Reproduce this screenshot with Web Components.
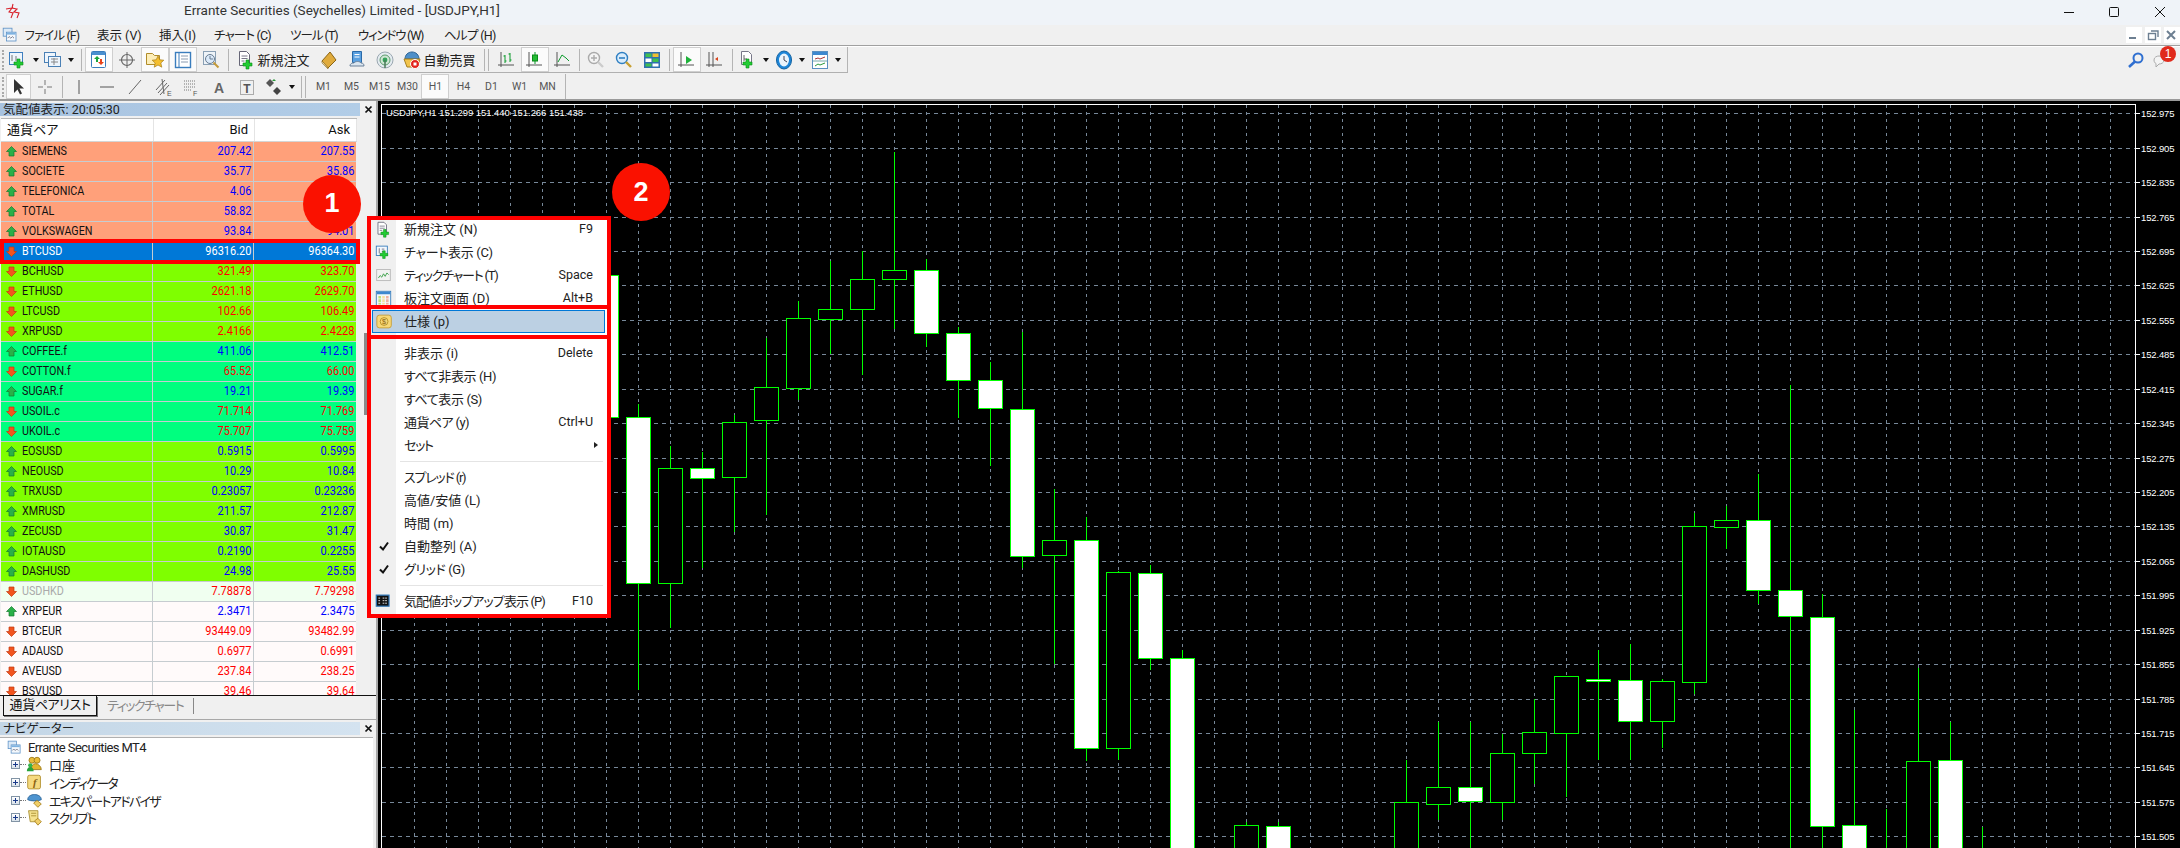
<!DOCTYPE html>
<html lang="ja">
<head>
<meta charset="utf-8">
<title>Errante MT4</title>
<style>
  html, body { margin: 0; height: 100%; overflow: hidden; }
  body {
    position: relative;
    width: 2180px;
    height: 848px;
    display: flex;
    flex-direction: column;
    background: #f0f0f0;
    color: #111;
    font: 12.5px Roboto, "Noto Sans CJK JP", sans-serif;
    font-feature-settings: "palt";
  }
  .main { flex: 1; display: flex; min-height: 0; }
  .left { width: 378px; box-sizing: border-box; border-right: 2px solid #a8a8a8; display: flex; flex-direction: column; }
</style>
</head>
<body>
<title-bar>Errante Securities (Seychelles) Limited - [USDJPY,H1]</title-bar>
<menu-bar></menu-bar>

<tool-bar ruled>
  <tool-btn w="34" icon="newChart" arrow></tool-btn>
  <tool-btn w="37" icon="profile" arrow></tool-btn>
  <tool-sep w="8"></tool-sep>
  <tool-btn w="28" icon="market" pressed></tool-btn>
  <tool-btn w="28" icon="cross"></tool-btn>
  <tool-btn w="28" icon="navigator" pressed></tool-btn>
  <tool-btn w="28" icon="terminal" pressed></tool-btn>
  <tool-btn w="28" icon="tester"></tool-btn>
  <tool-sep w="6"></tool-sep>
  <tool-btn w="84" icon="newOrder">新規注文</tool-btn>
  <tool-btn w="28" icon="book"></tool-btn>
  <tool-btn w="28" icon="server"></tool-btn>
  <tool-btn w="28" icon="signal"></tool-btn>
  <tool-btn w="80" icon="auto">自動売買</tool-btn>
  <tool-sep w="14" double></tool-sep>
  <tool-btn w="28" icon="bars"></tool-btn>
  <tool-btn w="28" icon="candle" pressed></tool-btn>
  <tool-btn w="28" icon="line"></tool-btn>
  <tool-sep w="5"></tool-sep>
  <tool-btn w="28" icon="zoomIn"></tool-btn>
  <tool-btn w="28" icon="zoomOut"></tool-btn>
  <tool-btn w="28" icon="tile"></tool-btn>
  <tool-sep w="7"></tool-sep>
  <tool-btn w="28" icon="scroll" pressed></tool-btn>
  <tool-btn w="28" icon="shift"></tool-btn>
  <tool-sep w="6"></tool-sep>
  <tool-btn w="36" icon="indicator" arrow></tool-btn>
  <tool-btn w="36" icon="clock" arrow></tool-btn>
  <tool-btn w="36" icon="template" arrow></tool-btn>
  <tool-end></tool-end>
  <tool-btn slot="right" w="24" icon="search" style="margin-right:2px"></tool-btn>
  <chat-icon slot="right"></chat-icon>
</tool-bar>

<tool-bar bottom>
  <tool-btn w="25" icon="arrow" pressed></tool-btn>
  <tool-btn w="28" icon="thin"></tool-btn>
  <tool-sep w="6"></tool-sep>
  <tool-btn w="28" icon="vline"></tool-btn>
  <tool-btn w="28" icon="hline"></tool-btn>
  <tool-btn w="28" icon="trend"></tool-btn>
  <tool-btn w="28" icon="channel"></tool-btn>
  <tool-btn w="28" icon="fibo"></tool-btn>
  <tool-btn w="28" icon="letter"></tool-btn>
  <tool-btn w="28" icon="textbox"></tool-btn>
  <tool-btn w="36" icon="shapes" arrow></tool-btn>
  <tool-sep w="12" double></tool-sep>
  <tool-btn w="28" small>M1</tool-btn>
  <tool-btn w="28" small>M5</tool-btn>
  <tool-btn w="28" small>M15</tool-btn>
  <tool-btn w="28" small>M30</tool-btn>
  <tool-btn w="28" small pressed>H1</tool-btn>
  <tool-btn w="28" small>H4</tool-btn>
  <tool-btn w="28" small>D1</tool-btn>
  <tool-btn w="28" small>W1</tool-btn>
  <tool-btn w="28" small>MN</tool-btn>
  <tool-end></tool-end>
</tool-bar>

<div class="main">
  <div class="left">
    <market-watch>
      <quote-row sym="SIEMENS" bid="207.42" ask="207.55" dir="up" bg="#ffa07a"></quote-row>
      <quote-row sym="SOCIETE" bid="35.77" ask="35.86" dir="up" bg="#ffa07a"></quote-row>
      <quote-row sym="TELEFONICA" bid="4.06" dir="up" bg="#ffa07a"></quote-row>
      <quote-row sym="TOTAL" bid="58.82" dir="up" bg="#ffa07a"></quote-row>
      <quote-row sym="VOLKSWAGEN" bid="93.84" ask="94.01" dir="up" bg="#ffa07a"></quote-row>
      <quote-row sym="BTCUSD" bid="96316.20" ask="96364.30" dir="down" selected></quote-row>
      <quote-row sym="BCHUSD" bid="321.49" ask="323.70" dir="down" bg="#7fff00"></quote-row>
      <quote-row sym="ETHUSD" bid="2621.18" ask="2629.70" dir="down" bg="#7fff00"></quote-row>
      <quote-row sym="LTCUSD" bid="102.66" ask="106.49" dir="down" bg="#7fff00"></quote-row>
      <quote-row sym="XRPUSD" bid="2.4166" ask="2.4228" dir="down" bg="#7fff00"></quote-row>
      <quote-row sym="COFFEE.f" bid="411.06" ask="412.51" dir="up" bg="#00ff7f"></quote-row>
      <quote-row sym="COTTON.f" bid="65.52" ask="66.00" dir="down" bg="#00ff7f"></quote-row>
      <quote-row sym="SUGAR.f" bid="19.21" ask="19.39" dir="up" bg="#00ff7f"></quote-row>
      <quote-row sym="USOIL.c" bid="71.714" ask="71.769" dir="down" bg="#00ff7f"></quote-row>
      <quote-row sym="UKOIL.c" bid="75.707" ask="75.759" dir="down" bg="#00ff7f"></quote-row>
      <quote-row sym="EOSUSD" bid="0.5915" ask="0.5995" dir="up" bg="#7fff00"></quote-row>
      <quote-row sym="NEOUSD" bid="10.29" ask="10.84" dir="up" bg="#7fff00"></quote-row>
      <quote-row sym="TRXUSD" bid="0.23057" ask="0.23236" dir="up" bg="#7fff00"></quote-row>
      <quote-row sym="XMRUSD" bid="211.57" ask="212.87" dir="up" bg="#7fff00"></quote-row>
      <quote-row sym="ZECUSD" bid="30.87" ask="31.47" dir="up" bg="#7fff00"></quote-row>
      <quote-row sym="IOTAUSD" bid="0.2190" ask="0.2255" dir="up" bg="#7fff00"></quote-row>
      <quote-row sym="DASHUSD" bid="24.98" ask="25.55" dir="up" bg="#7fff00"></quote-row>
      <quote-row sym="USDHKD" bid="7.78878" ask="7.79298" dir="down" bg="#f0fff0" muted></quote-row>
      <quote-row sym="XRPEUR" bid="2.3471" ask="2.3475" dir="up" bg="#fffafa"></quote-row>
      <quote-row sym="BTCEUR" bid="93449.09" ask="93482.99" dir="down" bg="#fffafa"></quote-row>
      <quote-row sym="ADAUSD" bid="0.6977" ask="0.6991" dir="down" bg="#fffafa"></quote-row>
      <quote-row sym="AVEUSD" bid="237.84" ask="238.25" dir="down" bg="#fffafa"></quote-row>
      <quote-row sym="BSVUSD" bid="39.46" ask="39.64" dir="down" bg="#fffafa"></quote-row>
    </market-watch>
    <nav-panel>
      <tree-node icon="server2" root style="letter-spacing:-.6px">Errante Securities MT4</tree-node>
      <tree-node icon="people">口座</tree-node>
      <tree-node icon="func" style="letter-spacing:-1.8px">インディケータ</tree-node>
      <tree-node icon="hat" style="letter-spacing:-1.7px">エキスパートアドバイザ</tree-node>
      <tree-node icon="scrollDoc" style="letter-spacing:-2px">スクリプト</tree-node>
    </nav-panel>
  </div>
  <price-chart></price-chart>
</div>

<context-menu>
  <menu-row icon="newOrder" key="F9">新規注文 (N)</menu-row>
  <menu-row icon="chartPlus" style="letter-spacing:-.3px">チャート表示 (C)</menu-row>
  <menu-row icon="tick" key="Space" style="letter-spacing:-1.2px">ティックチャート (T)</menu-row>
  <menu-row icon="board" key="Alt+B">板注文画面 (D)</menu-row>
  <menu-row icon="spec" active>仕様 (p)</menu-row>
  <menu-gap></menu-gap>
  <menu-row key="Delete">非表示 (i)</menu-row>
  <menu-row style="letter-spacing:-.4px">すべて非表示 (H)</menu-row>
  <menu-row style="letter-spacing:-.4px">すべて表示 (S)</menu-row>
  <menu-row key="Ctrl+U" style="letter-spacing:-.6px">通貨ペア (y)</menu-row>
  <menu-row sub style="letter-spacing:-1.300px">セット</menu-row>
  <menu-gap></menu-gap>
  <menu-row style="letter-spacing:-1.200px">スプレッド (r)</menu-row>
  <menu-row>高値/安値 (L)</menu-row>
  <menu-row>時間 (m)</menu-row>
  <menu-row checked>自動整列 (A)</menu-row>
  <menu-row checked style="letter-spacing:-.4px">グリッド (G)</menu-row>
  <menu-gap></menu-gap>
  <menu-row icon="popup" key="F10" style="letter-spacing:-.9px">気配値ポップアップ表示 (P)</menu-row>
</context-menu>

<red-box x="0" y="239" w="360" h="25"></red-box>
<red-box x="367" y="305" w="244" h="34"></red-box>
<step-badge x="332" y="203.5">1</step-badge>
<step-badge x="641" y="192">2</step-badge>

<script>
const plus = (x, y) => `<path d="M${x} ${y}h3v3h3v3h-3v3h-3v-3h-3v-3h3z" fill="#22cc33" stroke="#0a8a1a" stroke-width=".6"/>`;
const axes = '<path d="M4 2v15M1 15h16" stroke="#555" fill="none"/>';

const ICONS = {
  newChart: `<rect x="1.5" y="2.5" width="13" height="12" fill="#eef5fc" stroke="#3f7fbf"/><path d="M4 5v6M8 6v5" stroke="#777"/>${plus(9, 9)}`,
  profile: `<rect x="1.5" y="2.5" width="11" height="10" fill="#eef5fc" stroke="#4a80b5"/><rect x="5.5" y="6.5" width="12" height="10" fill="#eef5fc" stroke="#4a80b5"/><path d="M8 9h7M8 12h7M11 8v7" stroke="#888"/>`,
  market: `<rect x="2.5" y="1.5" width="14" height="16" rx="1" fill="#fff" stroke="#3a7dbd"/><rect x="3" y="2" width="13" height="3" fill="#4a90d0"/><path d="M8 6l-3 3h2v3h2V9h2z" fill="#1aa53a"/><path d="M12 15l3-3h-2V9h-2v3H9z" fill="#e8431a"/>`,
  cross: '<circle cx="10" cy="10" r="5.5" fill="none" stroke="#666" stroke-width="1.2"/><path d="M10 2v16M2 10h16" stroke="#666"/>',
  navigator: '<path d="M1.5 3.5h6l2 2h5v9h-13z" fill="#fdeeb8" stroke="#b08c2a"/><path d="M13 6l1.800 3.800 4 .4-3 2.800 1 4.200-3.800-2.200-3.800 2.200 1-4.200-3-2.800 4-.4z" fill="#f5bf2e" stroke="#a87c16" stroke-width=".7"/>',
  terminal: '<rect x="2.5" y="2.5" width="15" height="15" fill="#fff" stroke="#3a7dbd" stroke-width="1.4"/><path d="M6 3v14" stroke="#3a7dbd"/><path d="M8 6h7M8 9h7M8 12h7" stroke="#8a9bb0"/>',
  tester: '<rect x="2.5" y="1.5" width="12" height="13" fill="#eef3f8" stroke="#8aa0b5"/><circle cx="9" cy="9" r="4.5" fill="#dbeafa" stroke="#667a8f"/><path d="M9 6v3h3" stroke="#667a8f" fill="none"/><path d="M12.5 12.5l5 5" stroke="#c49a3a" stroke-width="2"/>',
  newOrder: `<path d="M3.5 1.5h7l3 3v11h-10z" fill="#fff" stroke="#667"/><path d="M5.5 6h6M5.5 8.5h6M5.5 11h3" stroke="#778"/>${plus(10, 10)}`,
  book: '<path d="M3 11l8-9 6 8-8 8z" fill="#e0ab3c" stroke="#8a6414"/><path d="M3 11l6 7v1l-6-6z" fill="#fff3c8" stroke="#8a6414" stroke-width=".6"/>',
  server: '<path d="M5.5 1.5h9v11h-9z" fill="#5aa0e0" stroke="#2a6aa8"/><path d="M7.5 4.5h5M7.5 7h5" stroke="#fff"/><path d="M3 16c0-3 3-3 4-3 1-2 6-2 7 0 2 0 3 1 3 3z" fill="#dbe6f0" stroke="#6a8099"/>',
  signal: '<circle cx="10" cy="10" r="8" fill="#e4ebf0" stroke="#9aa7b0"/><circle cx="10" cy="10" r="5" fill="#cfe6d4" stroke="#5d9b6e"/><circle cx="10" cy="10" r="2.4" fill="#35a35a"/><path d="M10 10v8" stroke="#4a7a5a" stroke-width="1.5"/>',
  auto: '<path d="M3 9c0-4 3-7 7-7s7 3 7 7z" fill="#4e8fc8" stroke="#2a6295"/><path d="M2 9h16l-2 8H5z" fill="#f2c44c" stroke="#a67f1c"/><circle cx="13" cy="14" r="4.5" fill="#e3231b" stroke="#fff"/><rect x="11.5" y="12.5" width="3" height="3" fill="#fff"/>',
  bars: `${axes}<path d="M8 5v8M8 6H6.5M8 11h1.5M13 3v9M13 4h-1.5M13 10h1.5" stroke="#0a9a2a" fill="none"/>`,
  candle: `${axes}<path d="M10 2v12" stroke="#0a9a2a"/><rect x="7.5" y="5" width="5" height="6" fill="#22bb33" stroke="#0a8a1a"/>`,
  line: `${axes}<path d="M5 12l4-7 4 3 3 3" stroke="#0a9a2a" fill="none"/>`,
  zoomIn: '<circle cx="8" cy="8" r="5.5" fill="#f4f4f4" stroke="#aaa" stroke-width="1.4"/><path d="M5 8h6M8 5v6" stroke="#aaa" stroke-width="1.4"/><path d="M12 12l5 5" stroke="#ccc" stroke-width="2.4"/>',
  zoomOut: '<circle cx="8" cy="8" r="5.5" fill="#d9ecfb" stroke="#2f7fc2" stroke-width="1.4"/><path d="M5 8h6" stroke="#2f7fc2" stroke-width="1.6"/><path d="M12 12l5 5" stroke="#c8a032" stroke-width="2.4"/>',
  tile: '<rect x="2" y="2" width="16" height="16" fill="#2e6fb0"/><rect x="3.5" y="3.5" width="6" height="3.5" fill="#3fbf4f"/><rect x="10.5" y="3.5" width="6" height="3.5" fill="#f0c030"/><rect x="3.5" y="8.5" width="6" height="3.5" fill="#fff"/><rect x="10.5" y="8.5" width="6" height="3.5" fill="#3fbf4f"/><rect x="3.5" y="13.5" width="6" height="3" fill="#3fbf4f"/><rect x="10.5" y="13.5" width="6" height="3" fill="#fff"/>',
  scroll: `${axes}<path d="M9 6l6 4-6 4z" fill="#1eb23a"/>`,
  shift: `<path d="M4 2v15M1 15h16M8 2v15" stroke="#555" fill="none"/><path d="M13 7l-3 2 3 2z" fill="#d9421a"/>`,
  indicator: `<path d="M3.5 1.5h7l3 3v10h-10z" fill="#fff" stroke="#778"/><path d="M6 5v6M6 9h3" stroke="#666"/>${plus(8, 9)}`,
  clock: '<ellipse cx="10" cy="10" rx="7.5" ry="9" fill="#1d86d9" stroke="#10609f"/><ellipse cx="10" cy="10" rx="5" ry="6.5" fill="#eaf4fc"/><path d="M10 6v4l3 2" stroke="#445" fill="none"/>',
  template: '<rect x="2.5" y="1.5" width="15" height="17" fill="#fff" stroke="#5a8fc0"/><rect x="3" y="2" width="14" height="3" fill="#3d88cf"/><path d="M5 9l3-1 2 1 5-2" stroke="#a33" fill="none"/><path d="M3 11h14" stroke="#7aa"/><path d="M5 16l3-2 2 1 5-2" stroke="#2a9a3a" fill="none"/>',
  arrow: '<path d="M6 2v14l3.5-3.5 2.5 5 2-1-2.5-5H16z" fill="#333"/>',
  thin: '<path d="M10 3v5M10 12v5M3 10h5M12 10h5" stroke="#777"/>',
  vline: '<path d="M10 3v14" stroke="#555"/>',
  hline: '<path d="M3 10h14" stroke="#555"/>',
  trend: '<path d="M4 17L16 3" stroke="#666"/>',
  channel: '<path d="M3 13L12 3M5 16L14 6M7 18l9-10M9 2l2 15" stroke="#666" fill="none"/><text x="14" y="19" font-size="7" fill="#555">E</text>',
  fibo: '<path d="M3 4h12M3 7h12M3 10h12M3 13h8" stroke="#777" stroke-dasharray="1 1"/><text x="12" y="19" font-size="7" fill="#555">F</text>',
  letter: '<text x="10" y="16" font-size="14" font-weight="700" text-anchor="middle" fill="#666">A</text>',
  textbox: '<rect x="3.5" y="3.5" width="13" height="14" fill="none" stroke="#666" stroke-dasharray="1 1"/><text x="10" y="15.5" font-size="12" font-weight="700" text-anchor="middle" fill="#555">T</text>',
  shapes: '<path d="M6 2l4 4-4 4-4-4z" fill="#555"/><path d="M8 4l2-2 2 2z" fill="#2a9a3a"/><path d="M13 10l4 4-4 4-4-4z" fill="#444"/>',
  search: '<circle cx="12" cy="8" r="4.5" fill="none" stroke="#2f6fd0" stroke-width="2"/><path d="M9 11.5l-6 5.5" stroke="#2f6fd0" stroke-width="2.6"/>',
  chartPlus: `<rect x="1.5" y="2.5" width="13" height="11" fill="#f3f8fd" stroke="#2f77b8"/><path d="M5 5v6M8 6h3M8 9h3" stroke="#667"/>${plus(9, 8)}`,
  tick: '<rect x="2" y="3" width="16" height="13" fill="#f2f2f2" stroke="#b5b5b5"/><path d="M4 13l2-3 2 2 2-4 2 3 2-4 2 2" stroke="#2a9a3a" fill="none"/>',
  board: '<rect x="1.5" y="1.5" width="17" height="17" fill="#f3f7fb" stroke="#2f77b8"/><rect x="2" y="2" width="16" height="3" fill="#3d88cf"/><path d="M4 7h3v3H4zM4 11h3v3H4zM4 15h3v2H4z" fill="#bde07a"/><path d="M8.5 7h3v3h-3zM8.5 11h3v3h-3zM8.5 15h3v2h-3z" fill="#f5e0a0"/><path d="M13 7h3v3h-3zM13 11h3v3h-3zM13 15h3v2h-3z" fill="#f0b0a0"/>',
  spec: '<rect x="1" y="2.500" width="17" height="15" rx="3" fill="#f7d877" stroke="#c49a30"/><circle cx="9.500" cy="10" r="4.600" fill="none" stroke="#b08a20"/><text x="9.500" y="13" font-size="8.500" text-anchor="middle" fill="#8a6212">$</text>',
  popup: '<rect x="1.500" y="2.500" width="15" height="13" fill="#111" stroke="#2f77b8" stroke-width="1.400"/><path d="M4 6h3M4 9h3M4 12h3M9 6h5M9 9h5M9 12h5" stroke="#fff" stroke-dasharray="2 1"/>',
  server2: '<rect x="1.500" y="1.500" width="11" height="10" fill="#dceaf7" stroke="#5a90c5"/><rect x="5.500" y="6.500" width="12" height="11" fill="#f4f8fc" stroke="#5a90c5"/><rect x="6" y="7" width="11" height="2.500" fill="#7db2e0"/><path d="M7 14l2-2 2 2 2-2 2 2" stroke="#667" fill="none"/>',
  people: '<circle cx="7" cy="5" r="3.500" fill="#e9bc3a" stroke="#9a7614"/><circle cx="13" cy="5" r="3.500" fill="#e9bc3a" stroke="#9a7614"/><path d="M6 16c0-4 2-7 5-7s7 3 7 7z" fill="#e4b52e" stroke="#9a7614"/><circle cx="5" cy="11" r="2.500" fill="#35b34a"/><path d="M1 18c0-3 1.500-5 4-5s4 2 4 5z" fill="#27a33a"/>',
  func: '<rect x="2" y="1.500" width="15" height="16" rx="2" fill="#f5da80" stroke="#b08c2a"/><text x="9.500" y="14" font-size="13" font-style="italic" font-weight="700" font-family="Liberation Serif" text-anchor="middle" fill="#8a6212">f</text>',
  hat: '<path d="M2 9c0-4 4-6 8-6s8 2 8 6c-3 2-13 2-16 0z" fill="#4d94d0" stroke="#2a6295"/><path d="M9 13l4-3 5 4-4 4z" fill="#f0cf6a" stroke="#a67f1c"/>',
  scrollDoc: '<path d="M3 2h11v13H5z" fill="#f5e28e" stroke="#a58a2a"/><path d="M6 5h6M6 8h6" stroke="#a58a2a"/><path d="M10 14l4-3 4 4-4 4z" fill="#f0cf6a" stroke="#a67f1c"/>'
};
const icon = (name, size = 20) => `<svg width="${size}" height="${size}" viewBox="0 0 20 20" style="display:block;font-family:'Liberation Sans'">${ICONS[name] || ''}</svg>`;

class TitleBar extends HTMLElement {
  constructor() {
    super();
    this.attachShadow({ mode: 'open' }).innerHTML = /* html */ `
      <style>
        :host { display: flex; align-items: center; height: 25px; background: #eff3f8; flex: none; }
        .logo { width: 16px; height: 16px; margin: -4px 0 0 5px; }
        .title { margin: -5px 0 0 163px; font-size: 13.5px; color: #333; white-space: nowrap; }
        .ctl { margin: 0 0 0 auto; display: flex; }
        .ctl svg { display: block; width: 46px; height: 20px; }
      </style>
      <svg class="logo" viewBox="0 0 16 16"><path d="M1 6l6-1-3 4 4 1-2 5M8 1l-1 4 5 1-3 3 5 1-2 5" fill="none" stroke="#d8202a" stroke-width="1.100"/></svg>
      <span class="title"><slot></slot></span>
      <div class="ctl">
        <svg viewBox="0 0 46 20"><path d="M22 9.500h10" stroke="#111"/></svg>
        <svg viewBox="0 0 46 20"><rect x="21.500" y="4.500" width="9" height="9" rx="1" fill="none" stroke="#111"/></svg>
        <svg viewBox="0 0 46 20"><path d="M21 4l10 10M31 4L21 14" stroke="#111"/></svg>
      </div>`;
  }
}
customElements.define('title-bar', TitleBar);

class MenuBar extends HTMLElement {
  constructor() {
    super();
    const items = [['ファイル (F)', 72.5, -.9], ['表示 (V)', 62, 0], ['挿入(I)', 55, 0], ['チャート (C)', 76, -.8], ['ツール (T)', 68, -1], ['ウィンドウ (W)', 86, -1.2], ['ヘルプ (H)', 60, -.7]];
    this.attachShadow({ mode: 'open' }).innerHTML = /* html */ `
      <style>
        :host { display: flex; align-items: center; height: 20px; background: #f0f0f0; border-bottom: 1px solid #a0a0a0; flex: none; }
        .app { margin: 0 6.500px 0 2px; width: 16px; }
        span { flex: none; font-size: 12.5px; white-space: nowrap; color: #222; margin-top: -2px; }
        .mdi { margin-left: auto; display: flex; gap: 3px; }
        .mdi svg { display: block; width: 16px; height: 16px; background: #fff; }
      </style>
      <div class="app">${icon('server2', 16)}</div>
      ${items.map(([t, w, ls]) => `<span style="width:${w}px;letter-spacing:${ls}px">${t}</span>`).join('')}
      <div class="mdi">
        <svg viewBox="0 0 16 16"><path d="M3 11h7" stroke="#6d7f91" stroke-width="2"/></svg>
        <svg viewBox="0 0 16 16"><rect x="3.500" y="6.500" width="7" height="6" fill="none" stroke="#6d7f91" stroke-width="1.400"/><path d="M6 4h7v6" fill="none" stroke="#6d7f91" stroke-width="1.400"/></svg>
        <svg viewBox="0 0 16 16"><path d="M3 4l8 8M11 4l-8 8" stroke="#6d7f91" stroke-width="2"/></svg>
      </div>`;
  }
}
customElements.define('menu-bar', MenuBar);

class ToolBar extends HTMLElement {
  constructor() {
    super();
    this.attachShadow({ mode: 'open' }).innerHTML = /* html */ `
      <style>
        :host { display: flex; align-items: stretch; height: 27px; background: #f0f0f0; border-top: 1px solid #fff; box-sizing: border-box; flex: none; }
        :host([bottom]) { height: 28px; padding-top: 1px; border-top: 0; border-bottom: 2px solid #9a9a9a; }
        .run { display: flex; align-items: center; padding-left: 2px; }
        :host([ruled]) .run { border-bottom: 1px solid #b0b0b0; }
        .handle { width: 2px; height: 20px; margin-right: 2px; border-left: 2px dotted #aaa; box-sizing: border-box; }
        .right { margin-left: auto; display: flex; align-items: center; }
      </style>
      <div class="run"><div class="handle"></div><slot></slot></div>
      <div class="right"><slot name="right"></slot></div>`;
  }
}
customElements.define('tool-bar', ToolBar);

class ToolBtn extends HTMLElement {
  constructor() {
    super();
    const name = this.getAttribute('icon');
    const hasArrow = this.hasAttribute('arrow');
    this.attachShadow({ mode: 'open' }).innerHTML = /* html */ `
      <style>
        :host { display: flex; align-items: center; justify-content: center; flex: none; height: 25px; box-sizing: border-box; font-size: 13px; white-space: nowrap; color: #222; }
        :host([pressed]) { background: #fbfbfb; border: 1px solid #cfcfcf; }
        :host([small]) { font-size: 10.5px; color: #555; }
        .lbl { margin-left: 1px; }
        i { width: 0; height: 0; margin-left: 4px; border: 3px solid transparent; border-top: 4px solid #111; border-bottom: 0; }
      </style>
      ${name ? icon(name) : ''}
      <span class="lbl"><slot></slot></span>
      ${hasArrow ? '<i></i>' : ''}`;
    this.style.width = this.getAttribute('w') + 'px';
  }
}
customElements.define('tool-btn', ToolBtn);

class ToolSep extends HTMLElement {
  constructor() {
    super();
    this.attachShadow({ mode: 'open' }).innerHTML = /* html */ `
      <style>
        :host { display: flex; justify-content: center; gap: 3px; flex: none; }
        b { width: 1px; height: 22px; background: #b4b4b4; }
      </style>
      <b></b>${this.hasAttribute('double') ? '<b></b>' : ''}`;
    this.style.width = this.getAttribute('w') + 'px';
  }
}
customElements.define('tool-sep', ToolSep);

class ToolEnd extends HTMLElement {
  constructor() {
    super();
    this.attachShadow({ mode: 'open' }).innerHTML = '<style>:host { display: block; width: 1px; height: 100%; margin-left: 4px; background: #b4b4b4; }</style>';
  }
}
customElements.define('tool-end', ToolEnd);

class ChatIcon extends HTMLElement {
  constructor() {
    super();
    this.attachShadow({ mode: 'open' }).innerHTML = /* html */ `
      <style>
        :host { display: block; position: relative; width: 28px; height: 24px; margin-right: 2px; }
        svg { position: absolute; left: 2px; top: 5px; }
        b { position: absolute; left: 10px; top: -2px; width: 16px; height: 16px; border-radius: 50%; background: #e02a1c; color: #fff; font: 400 12px/16px "Liberation Sans", sans-serif; text-align: center; }
      </style>
      <svg width="16" height="16" viewBox="0 0 16 16"><path d="M2 7c0-3 3-4 5-4s5 1 5 4-3 4-5 4l-3 3v-3.500C3 10 2 9 2 7z" fill="#f4f4f4" stroke="#aaa"/></svg>
      <b>1</b>`;
  }
}
customElements.define('chat-icon', ChatIcon);

class PanelHead extends HTMLElement {
  constructor() {
    super();
    this.attachShadow({ mode: 'open' }).innerHTML = /* html */ `
      <style>
        :host { display: flex; height: 13px; margin-top: 2px; flex: none; position: relative; }
        .bar { width: 360px; background: linear-gradient(90deg, var(--head-a), var(--head-b)); line-height: 13px; padding-left: 3px; box-sizing: border-box; font-size: 12.5px; color: #222; white-space: nowrap; }
        svg { margin: 2px 0 0 4px; }
      </style>
      <div class="bar"><slot></slot></div>
      <svg width="9" height="9" viewBox="0 0 9 9"><path d="M1.500 1.500l6 6M7.500 1.500l-6 6" stroke="#111" stroke-width="1.700"/></svg>`;
  }
}
customElements.define('panel-head', PanelHead);

class MarketWatch extends HTMLElement {
  constructor() {
    super();
    this.attachShadow({ mode: 'open' }).innerHTML = /* html */ `
      <style>
        :host { display: flex; flex-direction: column; height: 619px; flex: none; --head-a: #a8c3e0; --head-b: #b2cde7; font-size: 13px; }
        .head { display: grid; grid-template-columns: 153px 101px 102px; height: 24px; margin: 2px 0 0 1px; background: #fff; width: 356px; line-height: 22px; border-top: 1px solid #b8b8b8; box-sizing: border-box; border-bottom: 1px solid #d5d5d5; }
        .head span { padding: 0 6px; border-right: 1px solid #e4e4e4; box-sizing: border-box; }
        .head .n { text-align: right; }
        .list { position: relative; height: 553px; overflow: hidden; width: 373px; padding-left: 1px; box-sizing: border-box; }
        .thumb { position: absolute; left: 364px; top: 191px; width: 3px; height: 82px; background: #8a8a8a; }
        .tabs { height: 25px; box-sizing: border-box; border-top: 1px solid #111; border-bottom: 1px solid #a8a8a8; display: flex; font-size: 13px; }
        .tab { height: 20px; line-height: 18px; box-sizing: border-box; }
        .on { width: 94px; margin-left: 3px; text-align: center; letter-spacing: -.4px; border: 1px solid #111; border-width: 0 1px 1px 1px; background: #f0f0f0; box-shadow: 1px 1px 0 #777; }
        .off { margin-left: 10px; color: #888; padding-right: 10px; border-right: 1px solid #888; height: 16px; margin-top: 2px; line-height: 16px; letter-spacing: -1.5px; }
      </style>
      <panel-head>気配値表示: 20:05:30</panel-head>
      <div class="head"><span>通貨ペア</span><span class="n">Bid</span><span class="n">Ask</span></div>
      <div class="list"><slot></slot><div class="thumb"></div></div>
      <div class="tabs"><div class="tab on">通貨ペアリスト</div><div class="tab off">ティックチャート</div></div>`;
  }
}
customElements.define('market-watch', MarketWatch);

class QuoteRow extends HTMLElement {
  constructor() {
    super();
    const get = n => this.getAttribute(n);
    const up = get('dir') === 'up';
    const sel = this.hasAttribute('selected');
    const price = sel ? '#fff' : up ? '#0000ff' : '#ff0000';
    this.attachShadow({ mode: 'open' }).innerHTML = /* html */ `
      <style>
        :host { display: grid; grid-template-columns: 152px 101px 102px; width: 355px; height: 20px; box-sizing: border-box; border-bottom: 1px solid #c6ccd0; background: ${sel ? '#0078d7' : get('bg')}; }
        div { height: 19px; line-height: 19px; display: flex; align-items: center; border-right: 1px solid #c6ccd0; box-sizing: border-box; font-size: 12.5px; white-space: nowrap; }
        div:last-child { border-right: 0; }
        .sym { padding-left: 5px; color: ${sel ? '#fff' : this.hasAttribute('muted') ? '#aaa' : '#111'}; }
        .sym span { display: inline-block; margin: 0 0 2px 5px; transform: scaleX(.86); transform-origin: left center; }
        .num { justify-content: flex-end; padding-right: 2px; color: ${price}; }
        .num span { display: inline-block; margin-bottom: 2px; transform: scaleX(.88); transform-origin: right center; }
        svg { flex: none; }
      </style>
      <div class="sym">
        <svg width="11" height="11" viewBox="0 0 11 11"><path d="${up ? 'M5.500 0.500L10.500 5.500H8V10H3V5.500H0.500z' : 'M5.500 10.500L10.500 5.500H8V1H3V5.500H0.500z'}" fill="${up ? '#2bb048' : '#f2541e'}" stroke="${up ? '#167a2e' : '#c23a10'}" stroke-width=".7"/></svg>
        <span>${get('sym')}</span>
      </div>
      <div class="num"><span>${get('bid')}</span></div>
      <div class="num"><span>${get('ask') || ''}</span></div>`;
  }
}
customElements.define('quote-row', QuoteRow);

class NavPanel extends HTMLElement {
  constructor() {
    super();
    this.attachShadow({ mode: 'open' }).innerHTML = /* html */ `
      <style>
        :host { display: flex; flex-direction: column; flex: 1; min-height: 0; --head-a: #c3d6e6; --head-b: #d4e3f0; }
        .body { flex: 1; margin-top: 2px; width: 373px; background: #fff; border-top: 1px solid #b0b0b0; padding-top: 1px; box-sizing: border-box; }
      </style>
      <panel-head>ナビゲーター</panel-head>
      <div class="body"><slot></slot></div>`;
  }
}
customElements.define('nav-panel', NavPanel);

class TreeNode extends HTMLElement {
  constructor() {
    super();
    const root = this.hasAttribute('root');
    this.attachShadow({ mode: 'open' }).innerHTML = /* html */ `
      <style>
        :host { display: flex; align-items: center; height: ${root ? '16px' : '17.700px'}; margin-bottom: ${root ? '1px' : '0'}; padding-left: ${root ? '7px' : '11px'}; font-size: 13px; color: #222; white-space: nowrap; position: relative; }
        .box { width: 7px; height: 7px; border: 1px solid #8294a5; background: linear-gradient(#fff, #d9e2ea); box-sizing: content-box; position: relative; flex: none; }
        .box::before { content: ''; position: absolute; left: 1px; right: 1px; top: 3px; height: 1px; background: #1a3a8a; }
        .box::after { content: ''; position: absolute; top: 1px; bottom: 1px; left: 3px; width: 1px; background: #1a3a8a; }
        .dots { width: 6px; border-top: 1px dotted #777; flex: none; }
        .ico { flex: none; margin-right: 5px; }
        .txt { margin-left: 1px; }
      </style>
      ${root ? '' : '<span class="box"></span><span class="dots"></span>'}
      <span class="ico">${icon(this.getAttribute('icon'), root ? 15 : 17)}</span>
      <span class="txt"><slot></slot></span>`;
  }
}
customElements.define('tree-node', TreeNode);

const CANDLES = [
  // index from x=638, wick top, body top, body bottom, wick bottom, fill
  [-1, 260, 274, 415.6, 440, 1],
  [0, 402.8, 415.6, 581.6, 688.5, 1], [1, 444.8, 466.7, 581.6, 626.5, 0], [2, 451, 466.7, 476.7, 566.9, 1],
  [3, 414.2, 420.9, 475.8, 531.1, 0], [4, 337, 386, 419, 513.9, 0], [5, 300.2, 316.9, 387, 399, 0],
  [6, 259.7, 307.8, 318.3, 352.7, 0], [7, 249.7, 277.8, 307.8, 373.7, 0], [8, 150.9, 268.7, 277.8, 328.4, 0],
  [9, 257.8, 268.7, 331.7, 345.5, 1], [10, 325.5, 331.7, 378.9, 417, 1], [11, 360.8, 378.9, 407, 464.8, 1],
  [12, 331.2, 408, 555, 566.9, 1], [13, 487.7, 538.7, 554, 662.7, 0], [14, 515.8, 538.7, 746.7, 760, 1],
  [15, 570.2, 570.7, 746.7, 759, 0], [16, 564, 571.6, 656.5, 668.5, 1], [17, 648.9, 657, 870, 870, 1],
  [19, 821, 824.3, 870, 870, 0], [20, 821, 825.3, 870, 870, 1], [24, 759, 801.3, 870, 870, 0],
  [25, 721, 785.7, 802.7, 819.3, 0], [26, 721.4, 785.8, 799.6, 870, 1], [27, 732.9, 752, 801, 818.7, 0],
  [28, 697.6, 731, 752, 783, 0], [29, 674.7, 674.7, 731.9, 796.3, 0], [30, 648.9, 678, 680, 759, 1],
  [31, 643.2, 679, 720, 759, 1], [32, 678, 680, 720, 746.7, 0], [33, 511.5, 525.4, 680.9, 692.8, 0],
  [34, 505.3, 518.7, 525.8, 548.3, 0], [35, 472.9, 518.7, 588.8, 602.6, 1], [36, 383.7, 588.8, 615, 870, 1],
  [37, 592.6, 616, 824.9, 870, 1], [38, 709, 824, 870, 870, 1], [40, 667, 760, 870, 870, 0], [41, 721, 758.6, 870, 870, 1]
];

class PriceChart extends HTMLElement {
  constructor() {
    super();
    const RIGHT = 2135.5;
    let hGrid = '', vGrid = '', axis = '', bars = '';
    for (let k = 0; k < 22; k++) {
      const y = Math.round(112.3 + 34.43 * k) + .5;
      hGrid += `<path d="M382 ${y}H${RIGHT}"/>`;
      axis += `<path d="M${RIGHT} ${y}h4" stroke="#fff"/><text x="2141" y="${y + 3.5}">${(152.975 - .07 * k).toFixed(3)}</text>`;
    }
    for (let x = 414; x < RIGHT; x += 32) vGrid += `<path d="M${x + .5} 104V848"/>`;
    for (const [i, wt, bt, bb, wb, fill] of CANDLES) {
      const c = 638 + 32 * i;
      bars += `<path d="M${c + .5} ${Math.round(wt)}V${Math.round(wb)}" stroke="#0f0"/>` +
        `<rect x="${c - 11.5}" y="${Math.round(bt) + .5}" width="24" height="${Math.max(Math.round(bb) - Math.round(bt), 1)}" fill="${fill ? '#fff' : '#000'}" stroke="#0f0"/>`;
    }
    // the last two wicks have no body on screen
    bars += '<path d="M1886.500 808V848M1982.500 826V848" stroke="#0f0"/>';
    this.attachShadow({ mode: 'open' }).innerHTML = /* html */ `
      <style>
        :host { display: block; flex: 1; background: #000; }
        svg { display: block; shape-rendering: crispEdges; }
        text { fill: #fff; font: 9.500px "Liberation Sans", sans-serif; letter-spacing: -.15px; }
        .head { letter-spacing: -.05px; }
      </style>
      <svg width="1802" height="748" viewBox="378 100 1802 748">
        <g stroke="#778899" stroke-dasharray="4 4" fill="none">${hGrid}</g>
        <g stroke="#778899" stroke-dasharray="3 4" fill="none">${vGrid}</g>
        ${bars}
        <path d="M381.500 848V103.500H${RIGHT}V848" fill="none" stroke="#fff"/>
        ${axis}
        <text class="head" x="386" y="115">USDJPY,H1  151.299 151.440 151.266 151.438</text>
      </svg>`;
  }
}
customElements.define('price-chart', PriceChart);

class ContextMenu extends HTMLElement {
  constructor() {
    super();
    this.attachShadow({ mode: 'open' }).innerHTML = /* html */ `
      <style>
        :host { display: block; position: absolute; left: 367px; top: 216px; width: 244px; height: 402px; box-sizing: border-box; border: 4px solid #ff0000; background: linear-gradient(90deg, #f0f0f0 25px, #fff 25px); font-size: 13px; color: #222; }
        .inner { margin-top: -1.500px; }
      </style>
      <div class="inner"><slot></slot></div>`;
  }
}
customElements.define('context-menu', ContextMenu);

class MenuRow extends HTMLElement {
  constructor() {
    super();
    const name = this.getAttribute('icon');
    const key = this.getAttribute('key') || '';
    this.attachShadow({ mode: 'open' }).innerHTML = /* html */ `
      <style>
        :host { display: flex; align-items: center; height: 22.900px; box-sizing: border-box; white-space: nowrap; position: relative; }
        :host([active]) { background: #bcd0e3; outline: 1px solid #0078d7; outline-offset: -1px; margin: 0 2px 0 1px; }
        .ico { width: 25px; flex: none; display: flex; justify-content: center; }
        :host([active]) .ico { width: 24px; }
        .txt { margin: 0 0 2px 8px; }
        .key { margin: 0 0 2px auto; padding-right: 14px; font-size: 12.500px; letter-spacing: 0; }
        i { position: absolute; right: 9px; top: 8px; border: 3px solid transparent; border-left: 4px solid #222; border-right: 0; }
        .chk { width: 12px; height: 12px; }
      </style>
      <span class="ico">${name ? icon(name, 17) : this.hasAttribute('checked') ? '<svg class="chk" viewBox="0 0 12 12"><path d="M2 6.500l3 3 5-7" fill="none" stroke="#111" stroke-width="2"/></svg>' : ''}</span>
      <span class="txt"><slot></slot></span>
      <span class="key">${key}</span>
      ${this.hasAttribute('sub') ? '<i></i>' : ''}`;
  }
}
customElements.define('menu-row', MenuRow);

class MenuGap extends HTMLElement {
  constructor() {
    super();
    this.attachShadow({ mode: 'open' }).innerHTML = /* html */ `
      <style>
        :host { display: flex; align-items: center; height: 9.300px; padding: 0 4px 0 29px; }
        b { flex: 1; height: 1px; background: #e4e4e4; }
      </style>
      <b></b>`;
  }
}
customElements.define('menu-gap', MenuGap);

class RedBox extends HTMLElement {
  constructor() {
    super();
    const a = n => this.getAttribute(n) + 'px';
    this.attachShadow({ mode: 'open' }).innerHTML = '<style>:host { display: block; position: absolute; box-sizing: border-box; border: 4px solid #ff0000; }</style>';
    Object.assign(this.style, { left: a('x'), top: a('y'), width: a('w'), height: a('h') });
  }
}
customElements.define('red-box', RedBox);

class StepBadge extends HTMLElement {
  constructor() {
    super();
    this.attachShadow({ mode: 'open' }).innerHTML = /* html */ `
      <style>
        :host { display: flex; align-items: center; justify-content: center; position: absolute; width: 58px; height: 58px; border-radius: 50%; background: #fa1100; color: #fff; font: 700 27px "Liberation Sans", sans-serif; transform: translate(-50%, -50%); }
      </style>
      <slot></slot>`;
    this.style.left = this.getAttribute('x') + 'px';
    this.style.top = this.getAttribute('y') + 'px';
  }
}
customElements.define('step-badge', StepBadge);
</script>
</body>
</html>
